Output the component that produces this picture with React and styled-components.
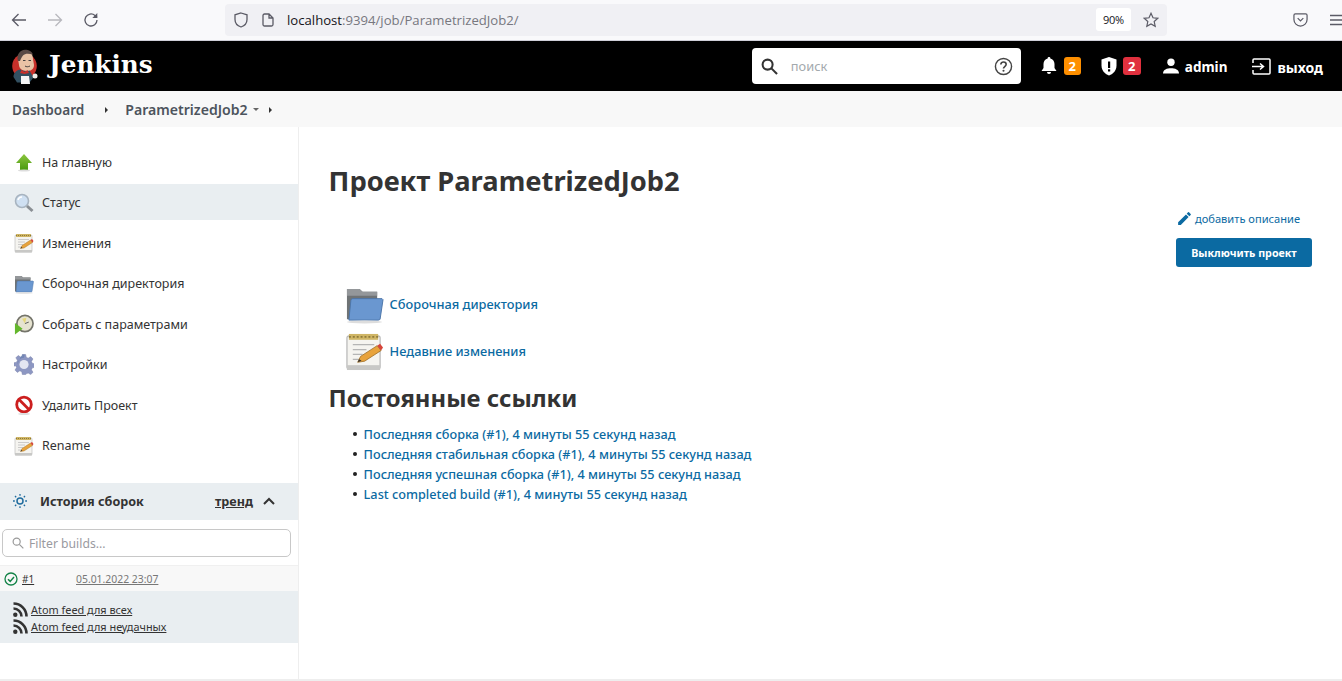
import styled, { createGlobalStyle } from 'styled-components';

const GlobalStyle = createGlobalStyle`
  html, body { margin: 0; padding: 0; background: #fff; }
  body { font-family: "Noto Sans", "Open Sans", sans-serif; color: #333; }
  * { box-sizing: border-box; }
  a { color: inherit; }
`;

const Page = styled.div`
  width: 1342px;
  height: 681px;
  overflow: hidden;
  display: flex;
  flex-direction: column;
`;

/* browser chrome */
const BrowserBar = styled.div`
  height: 41px;
  flex: none;
  background: #f9f9fb;
  border-bottom: 1px solid #cfcfd8;
  display: flex;
  align-items: center;
  padding: 0 0 1px 11px;
`;

const NavIcons = styled.div`
  display: flex;
  align-items: center;
  gap: 20px;
  width: 214px;
`;

const UrlBar = styled.div`
  width: 942px;
  height: 32px;
  background: #f0f0f4;
  border-radius: 4px;
  display: flex;
  align-items: center;
  padding: 0 8px;
  font-family: "Open Sans", "Noto Sans", sans-serif;
  font-size: 13.15px;
`;

const UrlIcons = styled.div`
  display: flex;
  align-items: center;
  gap: 12px;
  margin-right: 12px;
`;

const UrlText = styled.div`
  flex: 1;
  color: #77777f;
  span { color: #15141a; }
`;

const Zoom = styled.div`
  width: 35px;
  height: 23px;
  background: #fff;
  border-radius: 3px;
  font-size: 11px;
  letter-spacing: -0.3px;
  color: #15141a;
  display: flex;
  align-items: center;
  justify-content: center;
  margin-right: 12px;
`;

const RightTools = styled.div`
  display: flex;
  align-items: center;
  gap: 22px;
  margin-left: 126px;
`;

/* jenkins header */
const Header = styled.header`
  height: 50px;
  flex: none;
  background: #000;
  display: flex;
  align-items: center;
  padding: 0 19px 0 12px;
`;

const Brand = styled.div`
  display: flex;
  align-items: center;
  gap: 10px;
  flex: 1;
`;

const BrandName = styled.div`
  font-family: "DejaVu Serif", "Liberation Serif", serif;
  font-size: 24.7px;
  font-weight: bold;
  color: #fff;
  line-height: 1;
  padding-bottom: 2px;
`;

const SearchBox = styled.div`
  width: 269px;
  height: 36px;
  background: #fff;
  border-radius: 4px;
  display: flex;
  align-items: center;
  padding: 0 8px 0 9px;
  margin-right: 20px;
`;

const SearchText = styled.div`
  flex: 1;
  margin-left: 13px;
  font-size: 12.8px;
  color: #a3a9ad;
`;

const HeadItem = styled.div`
  display: flex;
  align-items: center;
  gap: ${(p) => p.$gap || 4}px;
  margin-left: ${(p) => p.$left || 0}px;
  color: #fff;
  font-size: ${(p) => p.$size || 14}px;
  font-weight: 700;
`;

const HeadLabel = styled.span`
  padding-top: 2px;
`;

const Badge = styled.div`
  width: ${(p) => p.$w}px;
  height: 18px;
  border-radius: 3px;
  background: ${(p) => p.$bg};
  color: #fff;
  font-size: 13px;
  font-weight: 700;
  display: flex;
  align-items: center;
  justify-content: center;
`;

/* breadcrumbs */
const Crumbs = styled.nav`
  height: 36px;
  flex: none;
  background: #f8f8f8;
  display: flex;
  align-items: center;
  padding: 1px 0 0 12px;
  font-weight: 600;
  color: #4d545d;
`;

const Crumb = styled.a`
  font-size: ${(p) => p.$size}px;
`;

const Caret = styled.span`
  display: inline-block;
  width: 0;
  height: 0;
  border-top: 3.5px solid transparent;
  border-bottom: 3.5px solid transparent;
  border-left: 3.5px solid #333;
  margin: ${(p) => p.$m};
`;

const CaretDown = styled.span`
  display: inline-block;
  width: 0;
  height: 0;
  border-left: 3px solid transparent;
  border-right: 3px solid transparent;
  border-top: 3px solid #666;
  margin: 0 10px 0 5px;
`;

/* page body */
const Body = styled.div`
  flex: 1;
  display: flex;
  border-bottom: 2px solid #eeeeee;
  min-height: 0;
`;

const Side = styled.aside`
  width: 299px;
  flex: none;
  border-right: 1px solid #eeeeee;
  padding-top: 16.9px;
`;

const Tasks = styled.div`
  display: flex;
  flex-direction: column;
  gap: 4.5px;
`;

const Task = styled.a`
  height: 36px;
  flex: none;
  display: flex;
  align-items: center;
  padding: 0.4px 0 0 14px;
  gap: 8px;
  font-size: 12.5px;
  color: #333;
  background: ${(p) => (p.$active ? '#e9eef1' : 'transparent')};
`;

const TaskIcon = styled.span`
  width: 20px;
  height: 20px;
  display: flex;
  align-items: center;
  justify-content: center;
`;

const HistoryHead = styled.div`
  margin-top: 20px;
  height: 37px;
  background: #e9eef1;
  display: flex;
  align-items: center;
  padding: 0 0 1px 13px;
  font-size: 12.6px;
  font-weight: 700;
  color: #333;
`;

const HistoryTitle = styled.div`
  flex: 1;
  margin-left: 13px;
`;

const Trend = styled.a`
  text-decoration: underline;
  margin-right: 10px;
`;

const ChevronSlot = styled.span`
  width: 23px;
`;

const FilterWrap = styled.div`
  padding: 8.5px 7px 8px 2px;
`;

const Filter = styled.div`
  height: 28px;
  border: 1px solid #c8c8c8;
  border-radius: 5px;
  display: flex;
  align-items: center;
  padding: 1px 0 0 9px;
  gap: 5px;
  font-size: 12.2px;
  color: #9a9a9f;
`;

const BuildRow = styled.div`
  height: 26.5px;
  background: #f8f8f8;
  border-top: 1px solid #f0f0f0;
  display: flex;
  align-items: center;
  padding-left: 4px;
  font-size: 10.4px;
`;

const BuildLink = styled.a`
  color: #333;
  font-size: 10px;
  text-decoration: underline;
  margin-left: 4px;
  width: 54px;
`;

const BuildDate = styled.a`
  color: #777;
  text-decoration: underline;
`;

const Feeds = styled.div`
  height: 51.5px;
  background: #e9eef1;
  padding: 9.5px 0 0 13px;
  display: flex;
  flex-direction: column;
  gap: 0.5px;
`;

const FeedRow = styled.a`
  height: 16.5px;
  display: flex;
  align-items: center;
  gap: 3px;
  font-size: 10.9px;
  color: #333;
  span { text-decoration: underline; }
`;

const Main = styled.main`
  flex: 1;
  padding: 34px 30px 0 29.6px;
  display: flex;
  flex-direction: column;
  color: #333;
`;

const Title = styled.h1`
  margin: 0;
  font-size: 27.3px;
  line-height: 40px;
  font-weight: 700;
  color: #333;
`;

const Actions = styled.div`
  display: flex;
  flex-direction: column;
  align-items: flex-start;
  align-self: flex-end;
  width: 136px;
  margin-top: 8px;
`;

const AddDescription = styled.a`
  display: flex;
  align-items: center;
  gap: 2px;
  font-size: 11.1px;
  color: #0b6aa2;
  height: 18px;
`;

const DisableButton = styled.button`
  margin-top: 11px;
  width: 136px;
  height: 29px;
  border: none;
  border-radius: 3px;
  background: #0b6aa2;
  color: #fff;
  font-family: inherit;
  font-size: 10.7px;
  font-weight: 700;
  padding: 0;
`;

const BigLinks = styled.div`
  margin-top: 14px;
  padding-left: 16px;
  display: flex;
  flex-direction: column;
  gap: 1px;
`;

const BigLink = styled.a`
  display: flex;
  align-items: center;
  height: 46px;
  gap: 6px;
  font-size: 12.8px;
  font-weight: 500;
  color: #0b6aa2;
`;

const Section = styled.h2`
  margin: 7px 0 0;
  font-size: 23.85px;
  line-height: 34px;
  font-weight: 700;
  color: #333;
`;

const Links = styled.ul`
  margin: 9px 0 0;
  padding: 0 0 0 24px;
  list-style: none;
  font-size: 12.7px;
  font-weight: 500;
  color: #0b6aa2;
`;

const LinkItem = styled.li`
  height: 20px;
  display: flex;
  align-items: center;
  gap: 7px;
  &::before {
    content: '';
    width: 4px;
    height: 4px;
    border-radius: 50%;
    background: #222;
  }
`;

/* little drawings */
const ArrowLeft = ({ color = '#5b5b66' }) => (
  <svg width="16" height="16" viewBox="0 0 16 16" fill="none" stroke={color} strokeWidth="1.3">
    <path d="M15 8H1.500M7.500 2L1.500 8l6 6" />
  </svg>
);

const ArrowRight = () => (
  <svg width="16" height="16" viewBox="0 0 16 16" fill="none" stroke="#b8b8bd" strokeWidth="1.3">
    <path d="M1 8h13.500M8.500 2l6 6-6 6" />
  </svg>
);

const Reload = () => (
  <svg width="16" height="16" viewBox="0 0 16 16" fill="none" stroke="#5b5b66" strokeWidth="1.3">
    <path d="M14 8a6 6 0 1 1-2-4.500L14 5.500" />
    <path d="M14.300 1v5h-5" fill="#5b5b66" stroke="none" />
  </svg>
);

const Shield = () => (
  <svg width="16" height="16" viewBox="0 0 16 16" fill="none" stroke="#5b5b66" strokeWidth="1.3">
    <path d="M8 1l6 1.800v4.700C14 11.500 11 14 8 15 5 14 2 11.500 2 7.500V2.800z" />
  </svg>
);

const PageGlyph = () => (
  <svg width="14" height="14" viewBox="0 0 14 14" fill="none" stroke="#5b5b66" strokeWidth="1.3">
    <path d="M2 2.500A1.500 1.500 0 0 1 3.500 1H8l4 4v6.500a1.500 1.500 0 0 1-1.500 1.500h-7A1.500 1.500 0 0 1 2 11.500zM8 1v4h4" />
  </svg>
);

const Star = () => (
  <svg width="16" height="16" viewBox="0 0 16 16" fill="none" stroke="#5b5b66" strokeWidth="1.200">
    <path d="M8 1.300l2 4.500 4.800.5-3.600 3.200 1 4.800L8 12l-4.200 2.300 1-4.800L1.200 6.300 6 5.800z" />
  </svg>
);

const Pocket = () => (
  <svg width="15" height="15" viewBox="0 0 16 16" fill="none" stroke="#5b5b66" strokeWidth="1.300">
    <path d="M2.500 2h11A1.500 1.500 0 0 1 15 3.500V8a7 7 0 0 1-14 0V3.500A1.500 1.500 0 0 1 2.500 2z" />
    <path d="M5 6.500l3 3 3-3" />
  </svg>
);

const Menu = () => (
  <svg width="12" height="14" viewBox="0 0 12 14" stroke="#5b5b66" strokeWidth="1.300">
    <path d="M0 2.500h12M0 7h12M0 11.500h12" />
  </svg>
);

const JenkinsLogo = () => (
  <svg width="27" height="35" viewBox="0 0 27 35">
    <circle cx="12.500" cy="17" r="12.300" fill="#c8302a" />
    <path d="M6 10c0-5 4-8 8-8s7 3 7 8l1 6c0 4-3 6-7 6-5 0-8-3-8-6z" fill="#e9c3a5" />
    <path d="M6 12C4 6 8 1 13 .8c4 0 7 1.500 8 5-4-1.500-8-1.500-10 .7-1 1-2 3-3 5.500z" fill="#5a4a45" />
    <path d="M1.500 28c0-4 3-7 7-7.500 3 2 6 2 9 1l4 7-4 5H5z" fill="#335061" />
    <path d="M9.500 21l3 2 3-2 1.500 3-4.500 1L8 24z" fill="#c8302a" />
    <path d="M9 27h8l1 8H9z" fill="#f5f5f5" />
    <circle cx="23" cy="27" r="2.500" fill="#f0ece6" />
    <path d="M11 11.500h2.500M16.500 11.500H19M13 17c1.500 1 3 1 5 0" stroke="#333" strokeWidth="0.900" fill="none" />
  </svg>
);

const SearchGlyph = ({ size = 17, color = '#333', sw = 2.2 }) => (
  <svg width={size} height={size} viewBox="0 0 18 18" fill="none" stroke={color} strokeWidth={sw}>
    <circle cx="7" cy="7" r="5.300" />
    <path d="M11 11l6 6" />
  </svg>
);

const Help = () => (
  <svg width="19" height="19" viewBox="0 0 20 20" fill="none" stroke="#444" strokeWidth="1.500">
    <circle cx="10" cy="10" r="8.500" />
    <path d="M7.200 7.800C7.200 6 8.500 5.200 10 5.200s2.800 1 2.800 2.500c0 2.300-2.800 2.300-2.800 4.300" strokeWidth="1.700" />
    <circle cx="10" cy="14.400" r="1.100" fill="#444" stroke="none" />
  </svg>
);

const Bell = () => (
  <svg width="16" height="18" viewBox="0 0 16 18" fill="#fff">
    <path d="M8 0a1.300 1.300 0 0 1 1.300 1.500C12 2.200 13.500 4.500 13.500 7v4l2 3H.5l2-3V7c0-2.500 1.500-4.800 4.200-5.500A1.300 1.300 0 0 1 8 0z" />
    <path d="M6 15h4a2 2 0 0 1-4 0z" />
  </svg>
);

const ShieldAlert = () => (
  <svg width="16" height="19" viewBox="0 0 16 19">
    <path d="M8 0l7.500 2.500v6c0 4.500-3 8.500-7.500 10C3.500 17 .5 13 .5 8.500v-6z" fill="#fff" />
    <rect x="7" y="4.500" width="2.200" height="6.500" fill="#000" />
    <rect x="7" y="12.300" width="2.200" height="2.200" fill="#000" />
  </svg>
);

const User = () => (
  <svg width="16" height="16" viewBox="0 0 16 16" fill="#fff">
    <circle cx="8" cy="4.200" r="3.700" />
    <path d="M0 15.500c0-4 4-5.300 8-5.300s8 1.300 8 5.300z" />
  </svg>
);

const Logout = () => (
  <svg width="19" height="17" viewBox="0 0 19 17" fill="none" stroke="#fff" strokeWidth="1.500">
    <path d="M1 5V2a1 1 0 0 1 1-1h15a1 1 0 0 1 1 1v13a1 1 0 0 1-1 1H2a1 1 0 0 1-1-1v-3" />
    <path d="M0 8.500h11M8 5.500l3.500 3-3.500 3" />
  </svg>
);

const UpArrow = () => (
  <svg width="18" height="19" viewBox="0 0 18 19">
    <defs>
      <linearGradient id="upg" x1="0" y1="0" x2="0" y2="1">
        <stop offset="0" stopColor="#8cc63f" />
        <stop offset="1" stopColor="#4a9a10" />
      </linearGradient>
    </defs>
    <path d="M9 1l8 9h-4v7H5v-7H1z" fill="url(#upg)" />
    <ellipse cx="9" cy="17.500" rx="6" ry="1" fill="#ddd" />
  </svg>
);

const Magnifier = () => (
  <svg width="20" height="20" viewBox="0 0 20 20">
    <circle cx="8" cy="8" r="6.500" fill="#cfe0f2" stroke="#a8b4c0" strokeWidth="1.600" />
    <path d="M4 7a4 4 0 0 1 4-3" stroke="#fff" strokeWidth="1.500" fill="none" />
    <path d="M13 13l5.500 5" stroke="#8a8f94" strokeWidth="3" />
  </svg>
);

const Notepad = ({ size = 20 }) => (
  <svg width={size} height={size} viewBox="0 0 40 40">
    <rect x="2" y="4" width="34" height="34" rx="2" fill="#f5f4f0" stroke="#b5b5b5" strokeWidth="1.200" />
    <rect x="2" y="34" width="34" height="5" fill="#c8c8c6" />
    <rect x="4" y="2" width="30" height="6" fill="#cfb565" />
    <path d="M4 5h30" stroke="#8e7a3a" strokeWidth="2" strokeDasharray="2 2" />
    <path d="M8 13h22M8 18h14M8 23h10M8 28h8" stroke="#b5b5b5" strokeWidth="1.300" />
    <path d="M13 31l3-6 17-11 4 5-17 11z" fill="#e8a33c" stroke="#9a6a20" strokeWidth="0.800" />
    <path d="M33 14l3-2 3 4-2 3z" fill="#d6453a" />
    <path d="M13 31l1.500-3 2.500 1.500z" fill="#333" />
  </svg>
);

const Folder = ({ size = 20 }) => (
  <svg width={size} height={size} viewBox="0 0 40 40">
    <path d="M2 4h13l3 3h15v28H2z" fill="#6f7375" />
    <path d="M2 4h13l3 3h15v4H2z" fill="#94979a" />
    <path d="M8 14h30l1 1-3 20a2 2 0 0 1-2 1H4l2-20a2 2 0 0 1 2-2z" fill="#6a97d0" stroke="#4d76aa" strokeWidth="1" />
    <ellipse cx="20" cy="38" rx="18" ry="1.500" fill="#ddd" />
  </svg>
);

const Clock = () => (
  <svg width="21" height="21" viewBox="0 0 21 21">
    <circle cx="11.500" cy="9.500" r="8.500" fill="#e6e3d0" stroke="#74746a" strokeWidth="1.800" />
    <path d="M11.500 9.500l-3-5 4.500-1z" fill="#e5d77a" />
    <path d="M11.500 9.500l4-1.500" stroke="#555" strokeWidth="1" />
    <path d="M1 9l8 6-8 6z" fill="#64b72c" />
  </svg>
);

const Gear = () => (
  <svg width="21" height="21" viewBox="0 0 24 24">
    <path
      fill="#8d97c2"
      stroke="#7a83ab"
      strokeWidth="0.600"
      d="M10 0h4l.7 3.400 2.300 1 3-1.900 2.800 2.800-1.900 3 1 2.300 3.400.7v4l-3.400.7-1 2.300 1.900 3-2.800 2.800-3-1.900-2.300 1L14 24h-4l-.7-3.400-2.300-1-3 1.900-2.800-2.800 1.900-3-1-2.300L-.3 14v-4l3.400-.7 1-2.300-1.900-3L5 1.200l3 1.900 2.300-1z"
    />
    <circle cx="12" cy="12" r="5.500" fill="#e4e6f2" />
    <path d="M4 12a8 8 0 0 1 8-8l1-4h-3L8 3z" fill="#5f79ac" opacity="0.6" />
  </svg>
);

const NoEntry = () => (
  <svg width="20" height="20" viewBox="0 0 20 20" fill="none">
    <circle cx="10" cy="9.500" r="7.300" fill="#fff" stroke="#cc1f1f" strokeWidth="2.800" />
    <path d="M4.800 4.300l10.400 10.400" stroke="#cc1f1f" strokeWidth="2.800" />
    <ellipse cx="10" cy="19" rx="6" ry="0.900" fill="#ddd" />
  </svg>
);

const Sun = () => (
  <svg width="14" height="14" viewBox="0 0 14 14" fill="none" stroke="#1f6c9e">
    <circle cx="7" cy="7" r="3" strokeWidth="1.500" />
    <path d="M7 0v1.800M7 12.200V14M0 7h1.800M12.200 7H14M2 2l1.200 1.200M10.800 10.800L12 12M12 2l-1.200 1.200M3.200 10.800L2 12" strokeWidth="1.300" />
  </svg>
);

const Chevron = () => (
  <svg width="12" height="8" viewBox="0 0 12 8" fill="none" stroke="#333" strokeWidth="2">
    <path d="M1 7l5-5 5 5" />
  </svg>
);

const CheckCircle = () => (
  <svg width="14" height="14" viewBox="0 0 14 14" fill="none" stroke="#138347" strokeWidth="1.300">
    <circle cx="7" cy="7" r="6" />
    <path d="M4 7.200l2.200 2.200L10 5" strokeWidth="1.500" />
  </svg>
);

const Rss = () => (
  <svg width="15" height="15" viewBox="0 0 15 15" fill="none" stroke="#333" strokeWidth="2.600">
    <circle cx="2.300" cy="12.700" r="2.200" fill="#333" stroke="none" />
    <path d="M0.500 6.500a8 8 0 0 1 8 8" />
    <path d="M0.500 1.500a13 13 0 0 1 13 13" />
  </svg>
);

const Pencil = () => (
  <svg width="17" height="17" viewBox="0 0 24 24" fill="#0b6aa2">
    <path d="M3 17.250V21h3.750L17.810 9.940l-3.750-3.750L3 17.250zM20.710 7.040a1 1 0 0 0 0-1.410l-2.340-2.340a1 1 0 0 0-1.410 0l-1.830 1.830 3.750 3.750 1.830-1.830z" />
  </svg>
);

const tasks = [
  { label: 'На главную', icon: <UpArrow /> },
  { label: 'Статус', icon: <Magnifier />, active: true },
  { label: 'Изменения', icon: <Notepad /> },
  { label: 'Сборочная директория', icon: <Folder /> },
  { label: 'Собрать с параметрами', icon: <Clock /> },
  { label: 'Настройки', icon: <Gear /> },
  { label: 'Удалить Проект', icon: <NoEntry /> },
  { label: 'Rename', icon: <Notepad /> },
];

const permalinks = [
  'Последняя сборка (#1), 4 минуты 55 секунд назад',
  'Последняя стабильная сборка (#1), 4 минуты 55 секунд назад',
  'Последняя успешная сборка (#1), 4 минуты 55 секунд назад',
  'Last completed build (#1), 4 минуты 55 секунд назад',
];

export default function App() {
  return (
    <Page>
      <GlobalStyle />
      <BrowserBar>
        <NavIcons>
          <ArrowLeft />
          <ArrowRight />
          <Reload />
        </NavIcons>
        <UrlBar>
          <UrlIcons>
            <Shield />
            <PageGlyph />
          </UrlIcons>
          <UrlText>
            <span>localhost</span>:9394/job/ParametrizedJob2/
          </UrlText>
          <Zoom>90%</Zoom>
          <Star />
        </UrlBar>
        <RightTools>
          <Pocket />
          <Menu />
        </RightTools>
      </BrowserBar>

      <Header>
        <Brand>
          <JenkinsLogo />
          <BrandName>Jenkins</BrandName>
        </Brand>
        <SearchBox>
          <SearchGlyph />
          <SearchText>поиск</SearchText>
          <Help />
        </SearchBox>
        <HeadItem $gap={7}>
          <Bell />
          <Badge $w={17} $bg="#fe8f00">2</Badge>
        </HeadItem>
        <HeadItem $gap={6} $left={20}>
          <ShieldAlert />
          <Badge $w={18} $bg="#e0303e">2</Badge>
        </HeadItem>
        <HeadItem $gap={6} $left={22} $size={13.5}>
          <User />
          <HeadLabel>admin</HeadLabel>
        </HeadItem>
        <HeadItem $gap={6} $left={25}>
          <Logout />
          <HeadLabel>выход</HeadLabel>
        </HeadItem>
      </Header>

      <Crumbs>
        <Crumb $size={13.6}>Dashboard</Crumb>
        <Caret $m="0 17px 0 21px" />
        <Crumb $size={14.1}>ParametrizedJob2</Crumb>
        <CaretDown />
        <Caret $m="0" />
      </Crumbs>

      <Body>
        <Side>
          <Tasks>
            {tasks.map((t) => (
              <Task key={t.label} $active={t.active}>
                <TaskIcon>{t.icon}</TaskIcon>
                {t.label}
              </Task>
            ))}
          </Tasks>

          <HistoryHead>
            <Sun />
            <HistoryTitle>История сборок</HistoryTitle>
            <Trend>тренд</Trend>
            <Chevron />
            <ChevronSlot />
          </HistoryHead>

          <FilterWrap>
            <Filter>
              <SearchGlyph size={12} color="#999" sw={1.800} />
              Filter builds...
            </Filter>
          </FilterWrap>

          <BuildRow>
            <CheckCircle />
            <BuildLink>#1</BuildLink>
            <BuildDate>05.01.2022 23:07</BuildDate>
          </BuildRow>

          <Feeds>
            <FeedRow>
              <Rss />
              <span>Atom feed для всех</span>
            </FeedRow>
            <FeedRow>
              <Rss />
              <span>Atom feed для неудачных</span>
            </FeedRow>
          </Feeds>
        </Side>

        <Main>
          <Title>Проект ParametrizedJob2</Title>
          <Actions>
            <AddDescription>
              <Pencil />
              добавить описание
            </AddDescription>
            <DisableButton>Выключить проект</DisableButton>
          </Actions>
          <BigLinks>
            <BigLink>
              <Folder size={39} />
              Сборочная директория
            </BigLink>
            <BigLink>
              <Notepad size={39} />
              Недавние изменения
            </BigLink>
          </BigLinks>
          <Section>Постоянные ссылки</Section>
          <Links>
            {permalinks.map((l) => (
              <LinkItem key={l}>{l}</LinkItem>
            ))}
          </Links>
        </Main>
      </Body>
    </Page>
  );
}
